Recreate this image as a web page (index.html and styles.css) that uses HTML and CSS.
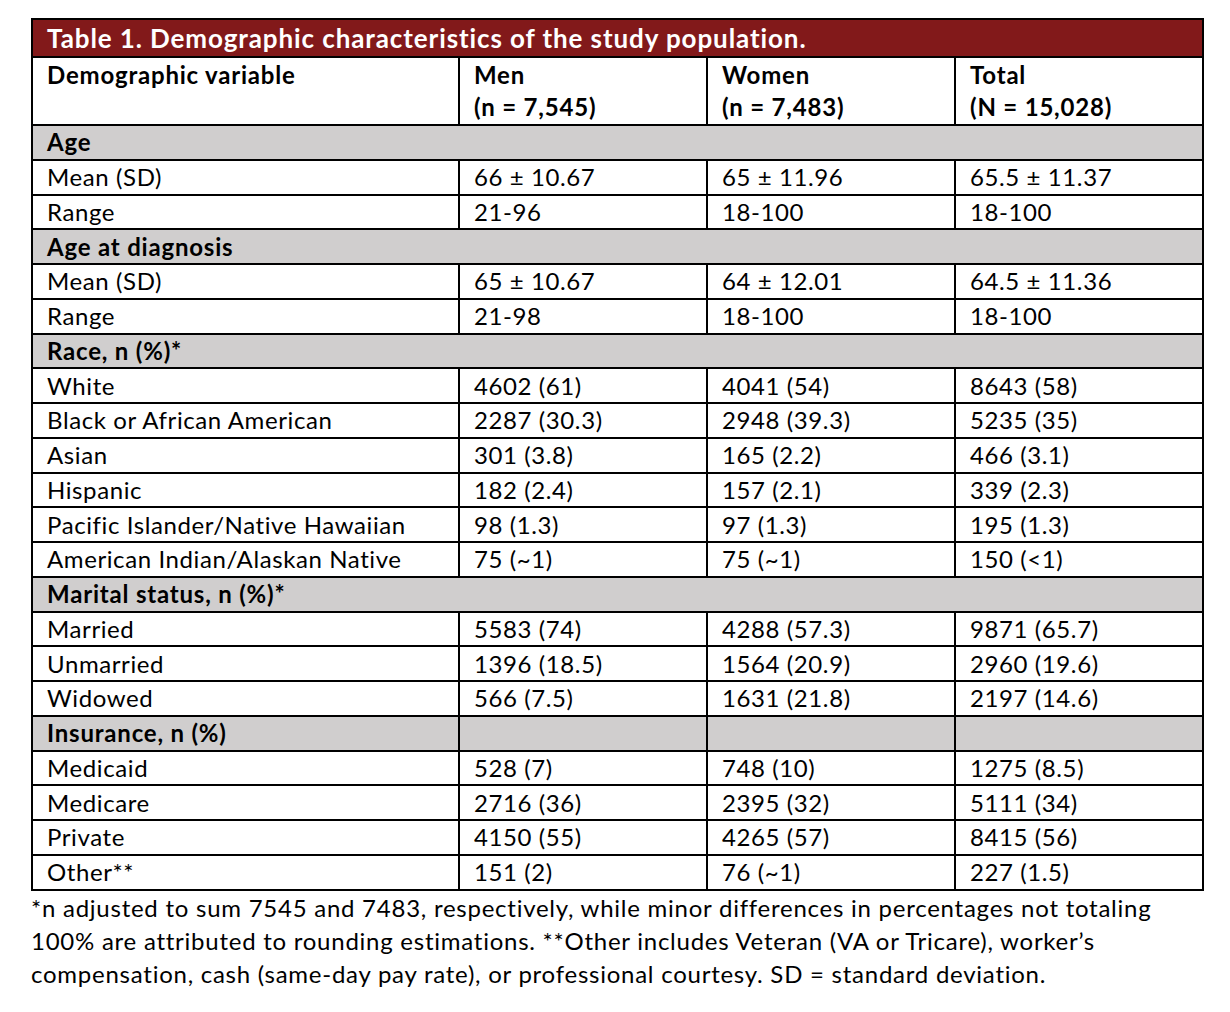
FILE: index.html
```html
<!DOCTYPE html>
<html lang="en">
<head>
<meta charset="utf-8">
<title>Table 1. Demographic characteristics of the study population.</title>
<link rel="stylesheet" href="styles.css">
</head>
<body>
<div class="page">
  <table class="demo">
    <colgroup>
      <col class="c-var">
      <col class="c-num">
      <col class="c-num">
      <col class="c-num">
    </colgroup>
    <thead>
      <tr class="title-row"><th colspan="4">Table 1. Demographic characteristics of the study population.</th></tr>
      <tr class="head-row">
        <th>Demographic variable</th>
        <th>Men<br>(n = 7,545)</th>
        <th>Women<br>(n = 7,483)</th>
        <th>Total<br>(N = 15,028)</th>
      </tr>
    </thead>
    <tbody>
      <tr class="section"><th colspan="4">Age</th></tr>
      <tr><td>Mean (SD)</td><td>66 ± 10.67</td><td>65 ± 11.96</td><td>65.5 ± 11.37</td></tr>
      <tr><td>Range</td><td>21-96</td><td>18-100</td><td>18-100</td></tr>
      <tr class="section"><th colspan="4">Age at diagnosis</th></tr>
      <tr><td>Mean (SD)</td><td>65 ± 10.67</td><td>64 ± 12.01</td><td>64.5 ± 11.36</td></tr>
      <tr><td>Range</td><td>21-98</td><td>18-100</td><td>18-100</td></tr>
      <tr class="section"><th colspan="4">Race, n (%)*</th></tr>
      <tr><td>White</td><td>4602 (61)</td><td>4041 (54)</td><td>8643 (58)</td></tr>
      <tr><td>Black or African American</td><td>2287 (30.3)</td><td>2948 (39.3)</td><td>5235 (35)</td></tr>
      <tr><td>Asian</td><td>301 (3.8)</td><td>165 (2.2)</td><td>466 (3.1)</td></tr>
      <tr><td>Hispanic</td><td>182 (2.4)</td><td>157 (2.1)</td><td>339 (2.3)</td></tr>
      <tr><td>Pacific Islander/Native Hawaiian</td><td>98 (1.3)</td><td>97 (1.3)</td><td>195 (1.3)</td></tr>
      <tr><td>American Indian/Alaskan Native</td><td>75 (~1)</td><td>75 (~1)</td><td>150 (&lt;1)</td></tr>
      <tr class="section"><th colspan="4">Marital status, n (%)*</th></tr>
      <tr><td>Married</td><td>5583 (74)</td><td>4288 (57.3)</td><td>9871 (65.7)</td></tr>
      <tr><td>Unmarried</td><td>1396 (18.5)</td><td>1564 (20.9)</td><td>2960 (19.6)</td></tr>
      <tr><td>Widowed</td><td>566 (7.5)</td><td>1631 (21.8)</td><td>2197 (14.6)</td></tr>
      <tr class="section split"><th>Insurance, n (%)</th><td></td><td></td><td></td></tr>
      <tr><td>Medicaid</td><td>528 (7)</td><td>748 (10)</td><td>1275 (8.5)</td></tr>
      <tr><td>Medicare</td><td>2716 (36)</td><td>2395 (32)</td><td>5111 (34)</td></tr>
      <tr><td>Private</td><td>4150 (55)</td><td>4265 (57)</td><td>8415 (56)</td></tr>
      <tr><td>Other**</td><td>151 (2)</td><td>76 (~1)</td><td>227 (1.5)</td></tr>
    </tbody>
  </table>
  <p class="note">*n adjusted to sum 7545 and 7483, respectively, while minor differences in percentages not totaling<br>100% are attributed to rounding estimations. **Other includes Veteran (VA or Tricare), worker’s<br>compensation, cash (same-day pay rate), or professional courtesy. SD = standard deviation.</p>
</div>
</body>
</html>
```

FILE: styles.css
```css
html, body {
  margin: 0;
  padding: 0;
  background: #ffffff;
}

body {
  font-family: Lato, "Open Sans", "DejaVu Sans", sans-serif;
  font-size: 24px;
  letter-spacing: 0.6px;
  color: #000000;
}

.page {
  padding: 18px 0 0 31px;
  width: 1171px;
}

.demo {
  width: 1171px;
  border-collapse: collapse;
  table-layout: fixed;
  border: 2px solid #000;
}

.c-var { width: 427px; }
.c-num { width: 248px; }

.demo th,
.demo td {
  border: 2px solid #000;
  padding: 0 0 0 14px;
  height: 34.75px;
  box-sizing: border-box;
  text-align: left;
  vertical-align: middle;
  line-height: 28px;
  font-weight: 400;
  white-space: nowrap;
}

.demo th {
  font-weight: 700;
  letter-spacing: 0.8px;
}

.title-row th {
  background: #82191a;
  color: #ffffff;
  height: 38px;
  font-size: 26px;
  letter-spacing: 0.9px;
  padding-top: 0;
}

.head-row th {
  height: 68px;
  line-height: 32px;
  vertical-align: top;
  padding-top: 1px;
}

.section th,
.section td {
  background: #d0cece;
}

.note {
  margin: 0;
  font-size: 24px;
  letter-spacing: 0.75px;
  line-height: 33px;
  padding-top: 0;
  white-space: nowrap;
}
```
